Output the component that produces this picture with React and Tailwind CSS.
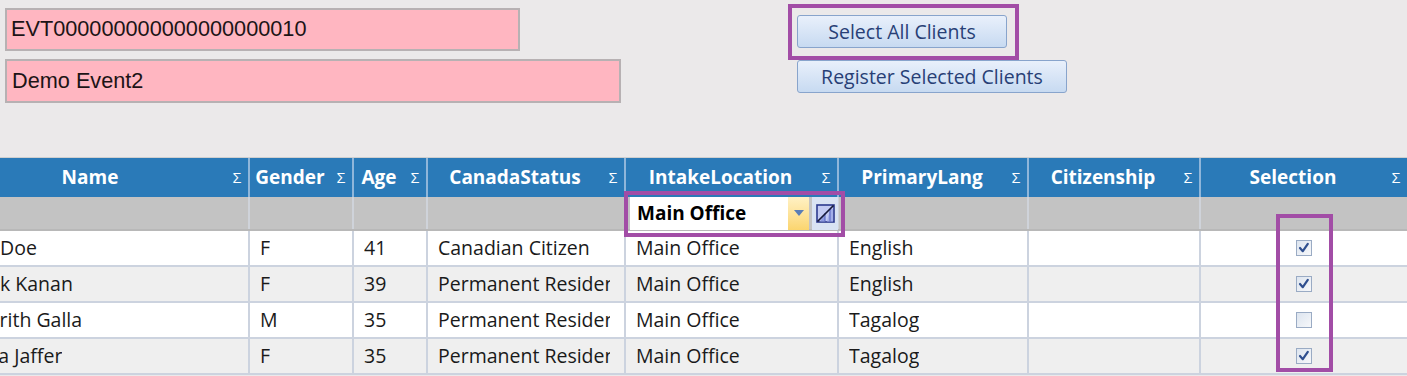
import React from 'react';

// Grid column setup (name column is scrolled partly off the left edge)
const COLUMNS = [
  { key: 'name', label: 'Name', width: 'w-[304px]', headPad: 'pl-[8px]' },
  { key: 'gender', label: 'Gender', width: 'w-[104px]', headPad: '' },
  { key: 'age', label: 'Age', width: 'w-[74px]', headPad: '' },
  { key: 'status', label: 'CanadaStatus', width: 'w-[198px]', headPad: '' },
  { key: 'location', label: 'IntakeLocation', width: 'w-[213px]', headPad: '' },
  { key: 'lang', label: 'PrimaryLang', width: 'w-[190px]', headPad: '' },
  { key: 'citizenship', label: 'Citizenship', width: 'w-[172px]', headPad: '' },
  { key: 'selection', label: 'Selection', width: 'w-[208px]', headPad: '' },
];

const CLIENTS = [
  { name: 'Jane Doe', gender: 'F', age: 41, status: 'Canadian Citizen', location: 'Main Office', lang: 'English', citizenship: '', selected: true },
  { name: 'Derek Kanan', gender: 'F', age: 39, status: 'Permanent Resident', location: 'Main Office', lang: 'English', citizenship: '', selected: true },
  { name: 'Namrith Galla', gender: 'M', age: 35, status: 'Permanent Resident', location: 'Main Office', lang: 'Tagalog', citizenship: '', selected: false },
  { name: 'Nadia Jaffer', gender: 'F', age: 35, status: 'Permanent Resident', location: 'Main Office', lang: 'Tagalog', citizenship: '', selected: true },
];

function CheckBox({ checked }) {
  return (
    <svg width="16" height="16" viewBox="0 0 16 16">
      <defs>
        <linearGradient id="cbfill" x1="0" y1="0" x2="1" y2="1">
          <stop offset="0%" stopColor="#dce4ef" />
          <stop offset="100%" stopColor="#f7f8fa" />
        </linearGradient>
      </defs>
      <rect x="0.5" y="0.5" width="15" height="15" fill="url(#cbfill)" stroke="#9aabc4" />
      {checked && (
        <path d="M4 8 L6.8 11.2 L11.8 3.8" fill="none" stroke="#2f4f8f" strokeWidth="2.2" strokeLinecap="round" strokeLinejoin="round" />
      )}
    </svg>
  );
}

function ClearFilterIcon() {
  return (
    <svg width="19" height="19" viewBox="0 0 19 19">
      <rect x="1" y="1" width="17" height="17" fill="#c3cbf3" stroke="#2c3a8e" strokeWidth="1.6" />
      <path d="M4 17.5 L9 9 L9 17.5 Z" fill="#8e9be0" />
      <path d="M11 17.5 L14 5 L17 5 L17 17.5 Z" fill="#a3aeea" />
      <path d="M9 9 V17.5 M14 5 V17.5" stroke="#5563bf" strokeWidth="1" />
      <path d="M1.5 17.5 L17.5 1.5" stroke="#16193a" strokeWidth="1.7" />
    </svg>
  );
}

function HeaderCell({ col }) {
  return (
    <div className={`${col.width} ${col.headPad} shrink-0 h-full flex items-center border-r-2 border-[#8fb6da]`}>
      <span className="flex-1 text-center font-bold text-white text-[19px] whitespace-nowrap">{col.label}</span>
      <span className="w-[22px] text-center text-white text-[15px]">Σ</span>
    </div>
  );
}

function BodyCell({ col, row }) {
  if (col.key === 'selection') {
    return (
      <div className={`${col.width} shrink-0 h-full flex items-center justify-center border-r-2 border-[#ccd3df]`}>
        <CheckBox checked={row.selected} />
      </div>
    );
  }
  return (
    <div className={`${col.width} shrink-0 h-full flex items-center pl-[10px] pr-[14px] border-r-2 border-[#ccd3df]`}>
      <span className="block overflow-hidden whitespace-nowrap">{row[col.key]}</span>
    </div>
  );
}

export default function App() {
  return (
    <div className="relative w-[1407px] h-[376px] overflow-hidden bg-[#ebe9ea] font-['Open_Sans',sans-serif]">
      {/* Event fields and action buttons */}
      <div className="h-[157px] flex">
        <div className="pl-[5px] pt-[8px] flex flex-col gap-[8px] font-['Liberation_Sans',Arial,sans-serif] text-[21.7px] text-[#1c1416]">
          <div className="w-[515px] h-[43px] bg-[#ffb6c1] border-2 border-[#b7b1b3] flex items-center pl-[4px]">
            EVT000000000000000000010
          </div>
          <div className="w-[616px] h-[44px] bg-[#ffb6c1] border-2 border-[#b7b1b3] flex items-center pl-[5px]">
            Demo Event2
          </div>
        </div>
        <div className="ml-[176px] pt-[15px] flex flex-col gap-[12px] text-[19.5px] text-[#283f76]">
          <button className="w-[210px] h-[33px] rounded-[3px] border border-[#88a4cc] bg-linear-to-b from-[#e9f0fb] to-[#c7daf1] leading-none">
            Select All Clients
          </button>
          <button className="w-[270px] h-[33px] rounded-[3px] border border-[#88a4cc] bg-linear-to-b from-[#e9f0fb] to-[#c7daf1] leading-none">
            Register Selected Clients
          </button>
        </div>
      </div>

      {/* Client grid */}
      <div className="ml-[-54px] w-[1463px] border-t border-[#cfcfcf]">
        <div className="h-[39px] flex bg-[#2a7ab8]">
          {COLUMNS.map((col) => (
            <HeaderCell key={col.key} col={col} />
          ))}
        </div>
        <div className="h-[34px] flex bg-[#c3c3c3] border-b-2 border-[#b8b8b8]">
          {COLUMNS.map((col) => (
            <div key={col.key} className={`${col.width} shrink-0 h-full border-r-2 border-[#cfd3da] flex items-center`}>
              {col.key === 'location' && (
                <div className="ml-[4px] flex items-center gap-[3px] h-[33px]">
                  <div className="w-[179px] h-[33px] bg-white flex items-center">
                    <span className="flex-1 pl-[7px] font-bold text-[19px] text-black">Main Office</span>
                    <span className="w-[21px] h-full flex items-center justify-center bg-linear-to-b from-[#fff1c4] to-[#fbd56e]">
                      <svg width="10" height="6" viewBox="0 0 10 6"><path d="M0 0 H10 L5 6 Z" fill="#5a7db6" /></svg>
                    </span>
                  </div>
                  <div className="w-[26px] h-[33px] bg-[#d9e3f3] flex items-center justify-center">
                    <ClearFilterIcon />
                  </div>
                </div>
              )}
            </div>
          ))}
        </div>
        {CLIENTS.map((row, i) => (
          <div
            key={row.name}
            className={`h-[36px] flex border-b-2 border-[#ccd3df] text-[19.5px] text-[#1a1a1a] ${i % 2 === 1 ? 'bg-[#efefef]' : 'bg-white'}`}
          >
            {COLUMNS.map((col) => (
              <BodyCell key={col.key} col={col} row={row} />
            ))}
          </div>
        ))}
      </div>

      {/* Highlight annotations */}
      <div className="absolute left-[788px] top-[4px] w-[231px] h-[56px] border-4 border-[#a24da6]" />
      <div className="absolute left-[624px] top-[191px] w-[221px] h-[46px] border-4 border-[#a24da6]" />
      <div className="absolute left-[1276px] top-[214px] w-[57px] h-[158px] border-4 border-[#a24da6]" />
    </div>
  );
}
